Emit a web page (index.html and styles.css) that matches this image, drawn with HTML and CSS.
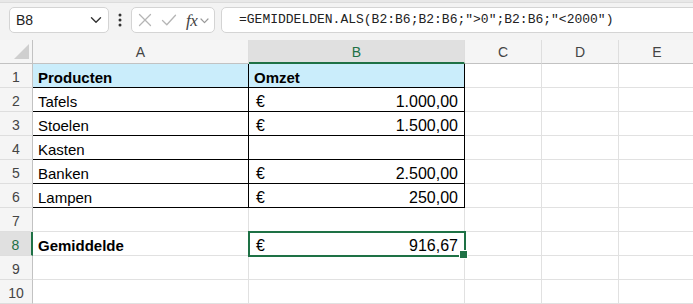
FILE: index.html
```html
<!DOCTYPE html>
<html lang="nl">
<head>
<meta charset="utf-8">
<title>Excel</title>
<link rel="stylesheet" href="styles.css">
</head>
<body>
<div class="app">
  <div class="topband"></div>
  <div class="fbar">
    <div class="namebox">
      <span class="nb-text">B8</span>
      <svg class="chev" width="12" height="8" viewBox="0 0 12 8"><path d="M1.5 1.8 L6 6.2 L10.5 1.8" fill="none" stroke="#333" stroke-width="1.4" stroke-linecap="round" stroke-linejoin="round"/></svg>
    </div>
    <div class="dots">
      <svg width="4" height="14" viewBox="0 0 4 14"><circle cx="2" cy="2" r="1.5" fill="#333"/><circle cx="2" cy="7" r="1.5" fill="#333"/><circle cx="2" cy="12" r="1.5" fill="#333"/></svg>
    </div>
    <div class="fnbox">
      <svg class="ic-x" width="14" height="14" viewBox="0 0 14 14"><path d="M1.5 1.5 L12.5 12.5 M12.5 1.5 L1.5 12.5" stroke="#b5b5b5" stroke-width="1.3" fill="none" stroke-linecap="round"/></svg>
      <svg class="ic-ok" width="16" height="14" viewBox="0 0 16 14"><path d="M1.5 7.5 L5.8 11.8 L14.5 2.2" stroke="#b5b5b5" stroke-width="1.3" fill="none" stroke-linecap="round" stroke-linejoin="round"/></svg>
      <span class="fx">fx</span>
      <svg class="chev-s" width="9" height="6" viewBox="0 0 9 6"><path d="M1 1 L4.5 4.6 L8 1" fill="none" stroke="#999" stroke-width="1.2" stroke-linecap="round" stroke-linejoin="round"/></svg>
    </div>
    <div class="formula">=GEMIDDELDEN.ALS(B2:B6;B2:B6;"&gt;0";B2:B6;"&lt;2000")</div>
  </div>

  <div class="sheet">
    <div class="ch corner"><svg width="16" height="16" viewBox="0 0 16 16"><polygon points="15,0 15,15 0,15" fill="#cfcfcf"/></svg></div>
    <div class="ch">A</div>
    <div class="ch sel-col">B</div>
    <div class="ch">C</div>
    <div class="ch">D</div>
    <div class="ch">E</div>

    <div class="rh">1</div>
    <div class="c t hdr bold">Producten</div>
    <div class="c t hdr bold">Omzet</div>
    <div class="c"></div><div class="c"></div><div class="c"></div>

    <div class="rh">2</div>
    <div class="c t">Tafels</div>
    <div class="c t num"><span>€</span><span>1.000,00</span></div>
    <div class="c"></div><div class="c"></div><div class="c"></div>

    <div class="rh">3</div>
    <div class="c t">Stoelen</div>
    <div class="c t num"><span>€</span><span>1.500,00</span></div>
    <div class="c"></div><div class="c"></div><div class="c"></div>

    <div class="rh">4</div>
    <div class="c t">Kasten</div>
    <div class="c t"></div>
    <div class="c"></div><div class="c"></div><div class="c"></div>

    <div class="rh">5</div>
    <div class="c t">Banken</div>
    <div class="c t num"><span>€</span><span>2.500,00</span></div>
    <div class="c"></div><div class="c"></div><div class="c"></div>

    <div class="rh">6</div>
    <div class="c t">Lampen</div>
    <div class="c t num"><span>€</span><span>250,00</span></div>
    <div class="c"></div><div class="c"></div><div class="c"></div>

    <div class="rh">7</div>
    <div class="c"></div><div class="c"></div>
    <div class="c"></div><div class="c"></div><div class="c"></div>

    <div class="rh sel-row">8</div>
    <div class="c bold">Gemiddelde</div>
    <div class="c num active"><span>€</span><span>916,67</span></div>
    <div class="c"></div><div class="c"></div><div class="c"></div>

    <div class="rh">9</div>
    <div class="c"></div><div class="c"></div>
    <div class="c"></div><div class="c"></div><div class="c"></div>

    <div class="rh">10</div>
    <div class="c"></div><div class="c"></div>
    <div class="c"></div><div class="c"></div><div class="c"></div>
  </div>
</div>
</body>
</html>
```

FILE: styles.css
```css
* { box-sizing: border-box; }
html, body {
  margin: 0;
  padding: 0;
  width: 693px;
  height: 304px;
  overflow: hidden;
  background: #f3f3f3;
  font-family: "Liberation Sans", Arial, sans-serif;
}
.app { width: 693px; }

.topband {
  height: 3px;
  background: #e8e8e8;
  border-bottom: 1px solid #dcdcdc;
}

.fbar {
  display: flex;
  align-items: stretch;
  height: 37px;
  padding: 4px 0 7px 9px;
  background: #f3f3f3;
}
.namebox {
  width: 100px;
  height: 26px;
  background: #fff;
  border: 1px solid #d4d4d4;
  border-radius: 5px;
  display: flex;
  align-items: center;
  justify-content: space-between;
  padding: 0 6px 0 6px;
  font-size: 14px;
  color: #222;
}
.dots {
  width: 22px;
  display: flex;
  align-items: center;
  justify-content: center;
}
.fnbox {
  width: 84px;
  height: 26px;
  background: #fff;
  border: 1px solid #d4d4d4;
  border-radius: 5px;
  display: flex;
  align-items: center;
  padding: 0 0 0 6px;
}
.ic-x { margin-right: 9px; }
.ic-ok { margin-right: 9px; }
.fx {
  font-family: "Liberation Serif", "DejaVu Serif", serif;
  font-style: italic;
  font-size: 17px;
  color: #444;
  letter-spacing: -0.5px;
  margin-right: 3px;
  line-height: 1;
}
.chev-s { margin-top: 1px; }
.formula {
  flex: 1;
  margin-left: 6px;
  margin-right: -10px;
  height: 26px;
  background: #fff;
  border: 1px solid #d4d4d4;
  border-radius: 5px;
  padding-left: 17px;
  font-family: "Liberation Mono", "DejaVu Sans Mono", monospace;
  font-size: 13px;
  line-height: 24px;
  color: #222;
  white-space: nowrap;
}

.sheet {
  display: grid;
  grid-template-columns: 33px 216px 216px 77px 77px 77px;
  grid-template-rows: 24px repeat(10, 24px);
  width: 696px;
  background: #fff;
}

.ch {
  background: #f5f5f5;
  border-bottom: 1px solid #c2c2c2;
  border-right: 1px solid #dedede;
  font-size: 14px;
  color: #444;
  display: flex;
  align-items: center;
  justify-content: center;
  padding-top: 1px;
}
.ch.corner {
  justify-content: flex-end;
  align-items: flex-end;
  padding: 0 2px 3px 0;
  border-right: 1px solid #c2c2c2;
}
.ch.sel-col {
  background: #e0e0e0;
  color: #1e7145;
  border-bottom: 2px solid #1e7145;
}

.rh {
  background: #f5f5f5;
  border-right: 1px solid #c2c2c2;
  border-bottom: 1px solid #dedede;
  font-size: 14px;
  color: #444;
  display: flex;
  align-items: center;
  justify-content: center;
  padding-top: 2px;
}
.rh.sel-row {
  background: #e0e0e0;
  color: #1e7145;
  border-right: 2px solid #1e7145;
}

.c {
  border-right: 1px solid #e1e1e1;
  border-bottom: 1px solid #e1e1e1;
  font-size: 15px;
  color: #000;
  padding: 4px 5px 0 5px;
  line-height: 20px;
  white-space: nowrap;
}
.c.t {
  border-right-color: #000;
  border-bottom-color: #000;
}
.c.hdr { background: #caedfb; }
.bold { font-weight: bold; }
.c.num {
  display: flex;
  justify-content: space-between;
  padding: 4px 6px 0 7px;
  font-size: 16px;
}
.c.active {
  position: relative;
  outline: 2px solid #1e7145;
  outline-offset: -1px;
}
.c.active::after {
  content: "";
  position: absolute;
  right: -4px;
  bottom: -4px;
  width: 7px;
  height: 7px;
  background: #1e7145;
  border: 1px solid #fff;
}
```
